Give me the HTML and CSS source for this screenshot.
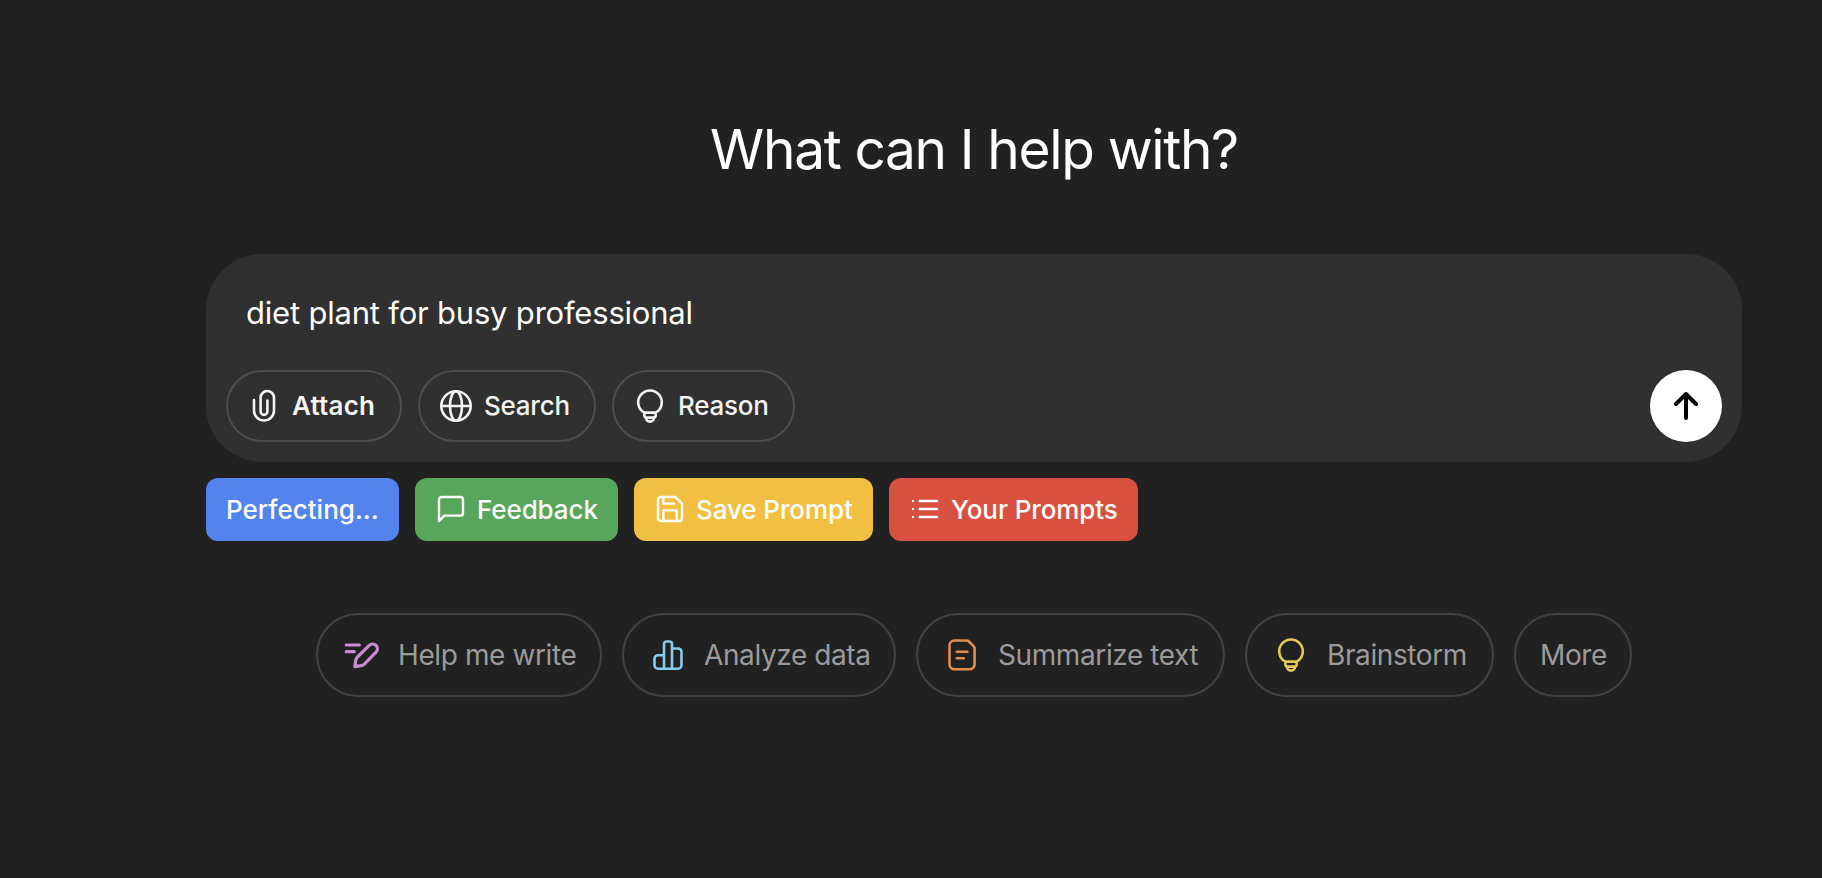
FILE: index.html
```html
<!DOCTYPE html>
<html lang="en">
<head>
    <meta charset="UTF-8">
    <meta name="viewport" content="width=device-width, initial-scale=1.0">
    <title>What can I help with?</title>
    <link rel="stylesheet" href="styles.css">
</head>
<body>
    <main class="page">
        <h1>What can I help with?</h1>

        <!-- Prompt box -->
        <form class="composer">
            <div class="prompt-text">diet plant for busy professional</div>
            <div class="composer-bar">
                <button type="button" class="tool tool-attach">
                    <svg class="icon" viewBox="0 0 36 36"><path d="M8 12v10.5a10 10 0 0 0 20 0V9.7a6.7 6.7 0 0 0-13.4 0v13.8a3.4 3.4 0 0 0 6.8 0V12.5"/></svg>
                    <span>Attach</span>
                </button>
                <button type="button" class="tool tool-search">
                    <svg class="icon" viewBox="0 0 36 36"><circle cx="18" cy="18" r="14.7"/><ellipse cx="18" cy="18" rx="6" ry="14.7"/><path d="M3.5 18h29"/></svg>
                    <span>Search</span>
                </button>
                <button type="button" class="tool tool-reason">
                    <svg class="icon" viewBox="0 0 36 36"><path d="M12.3 24.6a11.8 11.8 0 1 1 11.4 0zM12.3 24.6v2.6a2.4 2.4 0 0 0 2.4 2.4h6.6a2.4 2.4 0 0 0 2.4-2.4v-2.6M14 29.8a4 3.8 0 0 0 8 0"/></svg>
                    <span>Reason</span>
                </button>
                <button type="submit" class="send" aria-label="Send">
                    <svg viewBox="0 0 36 36"><path d="M18 30V6M8 16L18 6l10 10"/></svg>
                </button>
            </div>
        </form>

        <!-- Prompt actions -->
        <div class="actions">
            <button class="action action-perfect"><span>Perfecting...</span></button>
            <button class="action action-feedback">
                <svg viewBox="0 0 24 24"><path d="M21 15a2 2 0 0 1-2 2H7l-4 4V5a2 2 0 0 1 2-2h14a2 2 0 0 1 2 2z"/></svg>
                <span>Feedback</span>
            </button>
            <button class="action action-save">
                <svg viewBox="0 0 24 24"><path d="M19 21H5a2 2 0 0 1-2-2V5a2 2 0 0 1 2-2h11l5 5v11a2 2 0 0 1-2 2zM17 21v-8H7v8M7 3v5h8"/></svg>
                <span>Save Prompt</span>
            </button>
            <button class="action action-list">
                <svg viewBox="0 0 24 24"><path d="M8 6h13M8 12h13M8 18h13M3 6h.01M3 12h.01M3 18h.01"/></svg>
                <span>Your Prompts</span>
            </button>
        </div>

        <!-- Suggestions -->
        <div class="suggestions">
            <button class="chip chip-write">
                <svg class="icon" viewBox="0 0 36 36"><path d="M2.3 8h13M2.3 14.7h8M10.8 29.6l1-6.4c.2-1.3.7-2.3 1.8-3.4L25.2 8.4a4.8 4.8 0 0 1 6.8 6.8L20.6 26.8c-1 1-2 1.6-3.4 1.8z"/></svg>
                <span>Help me write</span>
            </button>
            <button class="chip chip-data">
                <svg class="icon" viewBox="0 0 36 36"><path d="M14 31.7V7a2.5 2.5 0 0 1 2.5-2.5h3A2.5 2.5 0 0 1 22 7v24.7M14 18.2H8a3.5 3.5 0 0 0-3.5 3.5v6.5A3.5 3.5 0 0 0 8 31.7h20a3.5 3.5 0 0 0 3.5-3.5V15a3.5 3.5 0 0 0-3.5-3.5h-6"/></svg>
                <span>Analyze data</span>
            </button>
            <button class="chip chip-summary">
                <svg class="icon" viewBox="0 0 36 36"><path d="M10.5 3.5h12c1 0 1.8.3 2.5 1l4.5 4.6c.7.7 1.1 1.5 1.1 2.5v15.7a5 5 0 0 1-5 5H10.5a5 5 0 0 1-5-5V8.5a5 5 0 0 1 5-5zM12.8 14.7h10.5M12.8 21.3h7"/></svg>
                <span>Summarize text</span>
            </button>
            <button class="chip chip-brain">
                <svg class="icon" viewBox="0 0 36 36"><path d="M12.3 24.6a11.8 11.8 0 1 1 11.4 0zM12.3 24.6v2.6a2.4 2.4 0 0 0 2.4 2.4h6.6a2.4 2.4 0 0 0 2.4-2.4v-2.6M14 29.8a4 3.8 0 0 0 8 0"/></svg>
                <span>Brainstorm</span>
            </button>
            <button class="chip chip-more"><span>More</span></button>
        </div>
    </main>
</body>
</html>
```
FILE: styles.css
```css
* {
    box-sizing: border-box;
}

body {
    margin: 0;
    background-color: #212121;
    color: #fff;
    font-family: Inter, "Liberation Sans", sans-serif;
    overflow: hidden;
}

.page {
    width: 1536px;
    margin-left: 206px;
    padding-top: 113px;
}

h1 {
    margin: 0 0 69px;
    font-size: 55px;
    line-height: 72px;
    font-weight: 400;
    letter-spacing: -1.35px;
    text-align: center;
    white-space: nowrap;
}

button {
    display: flex;
    align-items: center;
    margin: 0;
    font-family: inherit;
    white-space: nowrap;
    cursor: pointer;
}

svg {
    flex: none;
    fill: none;
    stroke: currentColor;
    stroke-linecap: round;
    stroke-linejoin: round;
}

.icon {
    width: 36px;
    height: 36px;
    stroke-width: 2.6;
}

/* Prompt box */
.composer {
    height: 208px;
    padding: 36px 20px 20px;
    border-radius: 56px;
    background-color: #303030;
}

.prompt-text {
    height: 80px;
    padding-left: 20px;
    font-size: 31px;
    line-height: 46px;
    letter-spacing: -0.2px;
}

.composer-bar {
    display: flex;
    gap: 16px;
}

.tool {
    height: 72px;
    padding: 0 0 0 18px;
    gap: 10px;
    border: 2px solid #4e4e4e;
    border-radius: 36px;
    background: none;
    color: #f3f3f3;
    font-size: 26px;
    font-weight: 500;
    letter-spacing: -0.25px;
}

.tool span {
    padding-bottom: 1px;
}

.tool-attach {
    width: 176px;
    font-weight: 600;
    letter-spacing: 0.2px;
}

.tool-search {
    width: 178px;
}

.tool-reason {
    width: 183px;
}

.send {
    justify-content: center;
    width: 72px;
    height: 72px;
    margin-left: auto;
    padding: 0;
    border: none;
    border-radius: 50%;
    background-color: #fff;
    color: #000;
}

.send svg {
    width: 36px;
    height: 36px;
    stroke-width: 4;
}

/* Prompt actions */
.actions {
    display: flex;
    gap: 16px;
    margin-top: 16px;
}

.action {
    height: 63px;
    padding: 0 0 0 20px;
    gap: 10px;
    border: none;
    border-radius: 12px;
    color: #fff;
    font-size: 26px;
    font-weight: 500;
    letter-spacing: -0.1px;
}

.action svg {
    width: 32px;
    height: 32px;
    margin-bottom: 1px;
    stroke-width: 1.8;
}

.action-perfect {
    width: 193px;
    background-color: #5383ec;
    letter-spacing: 0;
}

.action-feedback {
    width: 203px;
    background-color: #58a65c;
}

.action-save {
    width: 239px;
    background-color: #f1bf42;
}

.action-list {
    width: 249px;
    background-color: #d85140;
}

/* Suggestions */
.suggestions {
    display: flex;
    justify-content: center;
    gap: 20px;
    margin-top: 72px;
}

.chip {
    height: 84px;
    padding: 0 0 0 26px;
    gap: 18px;
    border: 2px solid #424242;
    border-radius: 42px;
    background: none;
    color: #cb8bd0;
    font-size: 28px;
    letter-spacing: -0.4px;
}

.chip span {
    color: #9b9b9b;
}

.chip-write {
    width: 286px;
}

.chip-write .icon {
    stroke-width: 3.2;
}

.chip-data {
    width: 274px;
    color: #85cdea;
}

.chip-summary {
    width: 309px;
    color: #e08c52;
}

.chip-brain {
    width: 249px;
    color: #e2c95a;
}

.chip-more {
    width: 118px;
    padding-left: 24px;
}
```
